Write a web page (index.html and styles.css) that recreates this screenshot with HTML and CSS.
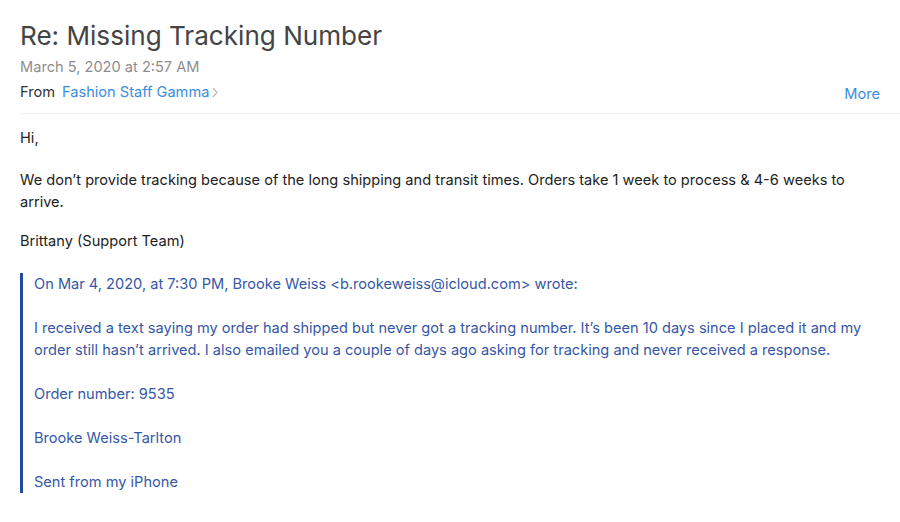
FILE: index.html
```html
<!DOCTYPE html>
<html lang="en">
<head>
    <meta charset="UTF-8">
    <meta name="viewport" content="width=device-width, initial-scale=1.0">
    <title>Re: Missing Tracking Number</title>
    <link rel="stylesheet" href="styles.css">
</head>
<body>
    <!-- Header -->
    <div class="header">
        <h1 class="subject">Re: Missing Tracking Number</h1>
        <div class="date">March 5, 2020 at 2:57 AM</div>
        <div class="from-row">
            <div class="from">
                <span class="label">From</span>
                <a class="sender" href="#">Fashion Staff Gamma</a>
                <svg class="chevron" width="6" height="11" viewBox="0 0 6 11">
                    <path d="M1 1 L5 5.5 L1 10" fill="none" stroke="#b8b8b8" stroke-width="1.2"/>
                </svg>
            </div>
            <a class="more" href="#">More</a>
        </div>
    </div>

    <!-- Message -->
    <div class="message">
        <p>Hi,</p>
        <p class="main">We don’t provide tracking because of the long shipping and transit times. Orders take 1 week to process &amp; 4-6 weeks to arrive.</p>
        <p>Brittany (Support Team)</p>

        <blockquote class="quote">
            <p>On Mar 4, 2020, at 7:30 PM, Brooke Weiss &lt;b.rookeweiss@icloud.com&gt; wrote:</p>
            <p>I received a text saying my order had shipped but never got a tracking number. It’s been 10 days since I placed it and my order still hasn’t arrived. I also emailed you a couple of days ago asking for tracking and never received a response.</p>
            <p>Order number: 9535</p>
            <p>Brooke Weiss-Tarlton</p>
            <p>Sent from my iPhone</p>
        </blockquote>
    </div>
</body>
</html>
```

FILE: styles.css
```css
body {
    margin: 0;
    padding-left: 20px;
    font-family: Inter, "Liberation Sans", Arial, sans-serif;
    background: #ffffff;
    color: #222222;
}

.header {
    padding-top: 20px;
    border-bottom: 1px solid #ececec;
    padding-bottom: 9px;
}

.subject {
    margin: 0 0 5px;
    font-size: 26.1px;
    line-height: 32px;
    font-weight: normal;
    color: #444444;
}

.date {
    font-size: 14.6px;
    line-height: 20px;
    color: #8e8e8e;
    margin-bottom: 5px;
}

.from-row {
    display: flex;
    justify-content: space-between;
    align-items: flex-start;
    line-height: 20px;
}

.from {
    display: flex;
    align-items: center;
    font-size: 14.6px;
}

.label {
    color: #333333;
    margin-right: 7px;
}

.sender {
    color: #3a8de2;
    text-decoration: none;
}

.chevron {
    margin-left: 3px;
}

.more {
    color: #3a8de2;
    text-decoration: none;
    font-size: 14.6px;
    margin-right: 20px;
    padding-top: 2px;
}

.message {
    padding-top: 13px;
    padding-right: 20px;
    font-size: 14.6px;
    line-height: 22px;
}

.message p {
    margin: 0 0 20px;
}

.message p.main {
    margin-bottom: 17px;
}

.quote {
    margin: 21px 0 0;
    padding-left: 11px;
    border-left: 3px solid #1f4aa0;
    color: #3657a6;
}

.quote p {
    margin: 0 0 22px;
}

.quote p:last-child {
    margin-bottom: 0;
}
```
